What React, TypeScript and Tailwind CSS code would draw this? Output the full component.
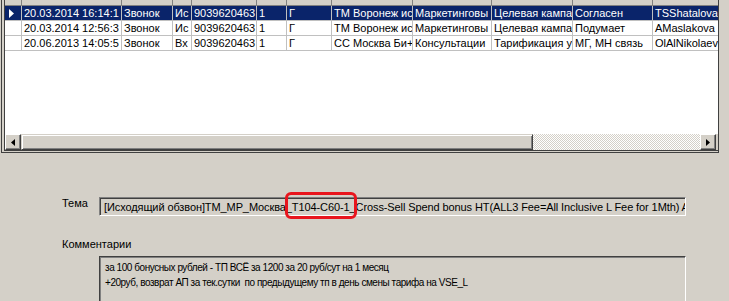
const cols = [17, 100, 51, 19, 65, 30, 45, 81, 79, 81, 80, 70];

const rows = [
  ["20.03.2014 16:14:1", "Звонок", "Ис", "9039620463", "1", "Г", "ТМ Воронеж ис", "Маркетинговы", "Целевая кампа", "Согласен", "TSShatalova"],
  ["20.03.2014 12:56:3", "Звонок", "Ис", "9039620463", "1", "Г", "ТМ Воронеж ис", "Маркетинговы", "Целевая кампа", "Подумает", "AMaslakova"],
  ["20.06.2013 14:05:5", "Звонок", "Вх", "9039620463", "1", "Г", "СС Москва Би+", "Консультации", "Тарификация у", "МГ, МН связь", "OlAlNikolaeva"],
];

const font = { fontFamily: '"Liberation Sans", Arial, sans-serif' };

const Arrow = ({ dir }: { dir: "l" | "r" }) => (
  <svg width="4" height="7" viewBox="0 0 4 7">
    {dir === "l" ? <path d="M4 0 L0 3.5 L4 7 Z" fill="#000" /> : <path d="M0 0 L4 3.5 L0 7 Z" fill="#000" />}
  </svg>
);

const Grid = () => {
  return (
    <div className="ml-[1px] w-[718px] h-[153px] border-l border-r border-b border-[#404040] pl-[2px] pb-[1px]">
      <div className="h-full flex flex-col border-l border-b border-[#404040] bg-white overflow-hidden">
        {/* header strip, mostly scrolled off */}
        <div className="h-[6px] flex bg-[#d4d0c8] border-b border-[#808080] shrink-0">
          {cols.map((w, i) => (
            <div key={i} style={{ width: w }} className="h-full border-r border-[#808080] shrink-0" />
          ))}
        </div>
        <div className="flex-1 flex flex-col">
          {rows.map((r, ri) => {
            const sel = ri === 0;
            return (
              <div key={ri} className="flex h-[15px] shrink-0">
                <div
                  style={{ width: cols[0] }}
                  className={`shrink-0 flex items-center pl-[4px] border-r border-b border-[#c0c0c0] ${sel ? "bg-[#0a246a]" : "bg-white"}`}
                >
                  {sel && (
                    <svg width="5" height="9" viewBox="0 0 5 9">
                      <path d="M0 0 L5 4.5 L0 9 Z" fill="#fff" />
                    </svg>
                  )}
                </div>
                {r.map((t, ci) => (
                  <div
                    key={ci}
                    style={{ width: cols[ci + 1], ...font }}
                    className={`shrink-0 overflow-hidden whitespace-nowrap pl-[2px] text-[11px] leading-[14px] border-r border-b border-[#c0c0c0] ${sel ? "bg-[#0a246a] text-white" : "bg-white text-black"}`}
                  >
                    {t}
                  </div>
                ))}
              </div>
            );
          })}
        </div>
        {/* horizontal scrollbar */}
        <div className="h-[16px] flex shrink-0 bg-[#d4d0c8]">
          <div className="w-[16px] h-full flex items-center justify-center border-t border-l border-white border-b border-r border-b-[#404040] border-r-[#404040] shadow-[inset_-1px_-1px_#808080]">
            <Arrow dir="l" />
          </div>
          <div className="w-[512px] h-full border-t border-l border-[#d4d0c8] border-b border-r border-b-[#404040] border-r-[#404040] shadow-[inset_1px_1px_#fff,inset_-1px_-1px_#808080]" />
          <div className="w-[167px] h-full bg-[repeating-conic-gradient(#d4d0c8_0%_25%,#ffffff_0%_50%)] bg-size-[2px_2px]" />
          <div className="w-[16px] h-full flex items-center justify-center border-t border-l border-white border-b border-r border-b-[#404040] border-r-[#404040] shadow-[inset_-1px_-1px_#808080]">
            <Arrow dir="r" />
          </div>
        </div>
      </div>
    </div>
  );
};

export default function App() {
  return (
    <div className="w-[729px] h-[301px] bg-[#d4d0c8] overflow-hidden text-black" style={font}>
      <Grid />
      <div className="pl-[62px] pt-[44px]">
        <div className="flex items-start">
          <div className="w-[37px] text-[11px] leading-[13px]">Тема</div>
          <div className="relative">
            <div className="w-[587px] h-[19px] border-t border-l border-[#808080] border-b border-r border-b-white border-r-white shadow-[inset_1px_1px_#404040] overflow-hidden whitespace-nowrap pl-[4px] pt-[2px] text-[11px] leading-[14px] tracking-[-0.1px]">
              [Исходящий обзвон]TM_MP_Москва_T104-C60-1_Cross-Sell Spend bonus HT(ALL3 Fee=All Inclusive L Fee for 1Mth) All3
            </div>
            <div className="absolute left-[186px] top-[-5px] w-[72px] h-[27px] border-[3px] border-[#e8151d] rounded-[6px]" />
          </div>
        </div>
        <div className="mt-[21px] text-[11px] leading-[14px]">Комментарии</div>
        <div className="ml-[37px] mt-[5px] w-[587px] h-[60px] border-t border-l border-[#404040] border-r border-r-white shadow-[inset_1px_1px_#808080] pl-[5px] pt-[3px] text-[10px] leading-[15px] tracking-[-0.45px] whitespace-pre">
          {"за 100 бонусных рублей - ТП ВСЁ за 1200 за 20 руб/сут на 1 месяц\n+20руб, возврат АП за тек.сутки  по предыдущему тп в день смены тарифа на VSE_L"}
        </div>
      </div>
    </div>
  );
}
